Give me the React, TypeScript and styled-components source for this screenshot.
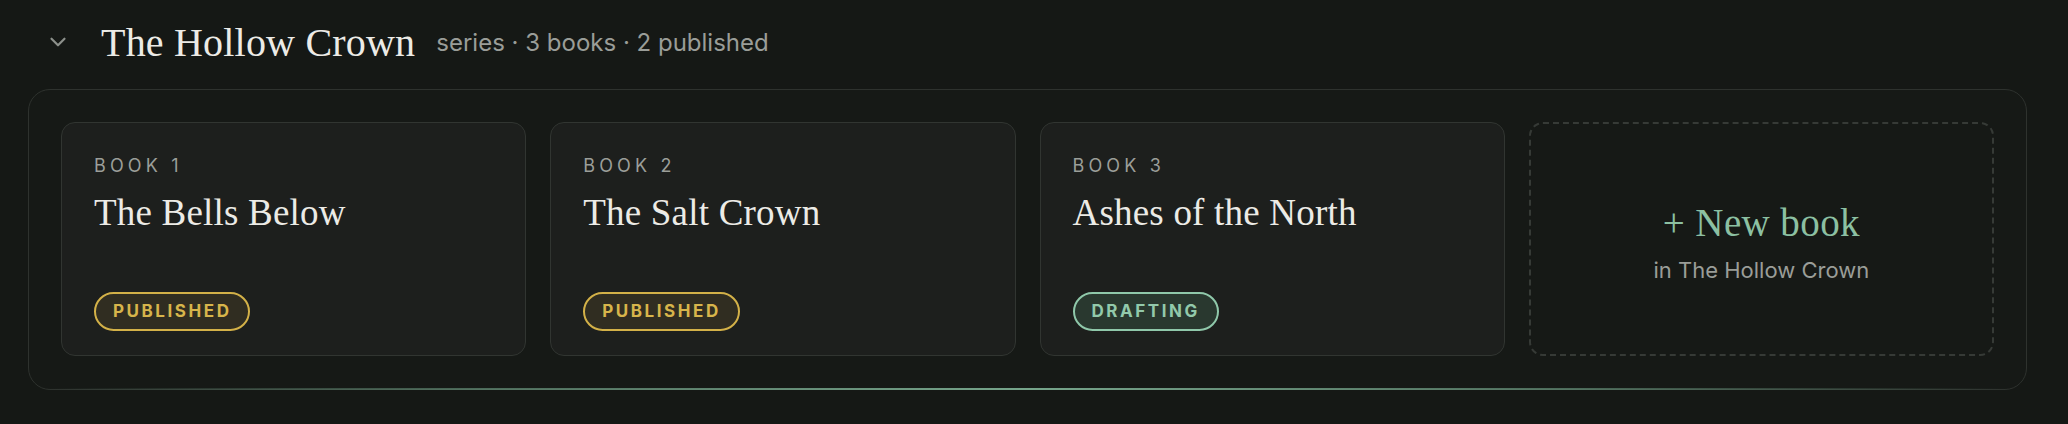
import styled, { createGlobalStyle } from "styled-components";
import { ChevronDown } from "lucide-react";

type BookStatus = "published" | "drafting";

type Book = {
    id: number;
    title: string;
    status: BookStatus;
};

const books: Book[] = [
    { id: 1, title: "The Bells Below", status: "published" },
    { id: 2, title: "The Salt Crown", status: "published" },
    { id: 3, title: "Ashes of the North", status: "drafting" },
];

const seriesName = "The Hollow Crown";

const GlobalStyle = createGlobalStyle`
body {
    margin: 0;
    background: #151815;
    font-family: Inter, "Noto Sans", sans-serif;
    color: #e9e7e1;
}
`

const Page = styled.div`
padding: 14px 41px 30px 28px;
`

const Header = styled.div`
display: flex;
align-items: center;
height: 56px;
margin-bottom: 19px;
`

const Toggle = styled.button`
display: flex;
align-items: center;
justify-content: center;
width: 34px;
height: 34px;
margin-left: 13px;
margin-right: 26px;
padding: 0;
border: none;
background: none;
color: #8c908b;
cursor: pointer;
`

const SeriesTitle = styled.h2`
margin: 0;
font-family: "Liberation Serif", serif;
font-weight: 400;
font-size: 40px;
letter-spacing: 0.2px;
color: #ecebe6;
`

const Meta = styled.span`
margin-left: 21px;
font-size: 24px;
color: #9a9d98;
`

const Shelf = styled.div`
position: relative;
display: grid;
grid-template-columns: repeat(4, 1fr);
gap: 24px;
padding: 32px 32px 33px;
border: 1px solid #2e322e;
border-radius: 22px;
background: #161916;

&::after {
    content: "";
    position: absolute;
    left: 16px;
    right: 16px;
    bottom: -1px;
    height: 2px;
    background: linear-gradient(90deg, rgba(104, 150, 125, 0) 0%, rgba(104, 150, 125, 0.65) 22%, #76a58b 50%, rgba(104, 150, 125, 0.65) 78%, rgba(104, 150, 125, 0) 100%);
}
`

const Card = styled.div`
display: flex;
flex-direction: column;
box-sizing: border-box;
height: 234px;
padding: 32px 32px 24px;
border: 1px solid #313531;
border-radius: 14px;
background: #1d1f1d;
`

const BookNo = styled.div`
font-size: 18px;
line-height: 22px;
letter-spacing: 0.23em;
color: #9b9e99;
`

const BookTitle = styled.div`
margin-top: 14px;
font-family: "Liberation Serif", serif;
font-size: 37px;
line-height: 44px;
letter-spacing: 0.2px;
color: #ecebe6;
`

const Badge = styled.span<{ $status: BookStatus }>`
align-self: flex-start;
margin-top: auto;
padding: 7px 17px 8px;
border: 2px solid ${p => p.$status === "published" ? "#d3b148" : "#8fc8aa"};
border-radius: 999px;
background: ${p => p.$status === "published" ? "rgba(211, 177, 72, 0.1)" : "rgba(90, 160, 122, 0.2)"};
color: ${p => p.$status === "published" ? "#d7b54b" : "#92c9ab"};
font-size: 17px;
line-height: 20px;
font-weight: 700;
letter-spacing: 0.15em;
`

const NewCard = styled.button`
display: flex;
flex-direction: column;
align-items: center;
justify-content: center;
gap: 12px;
height: 234px;
padding-top: 6px;
border: 2px dashed #363a36;
border-radius: 14px;
background: transparent;
cursor: pointer;
`

const NewLabel = styled.span`
font-family: "Liberation Serif", serif;
font-size: 39px;
line-height: 44px;
letter-spacing: 0.4px;
color: #8cc0a2;
`

const NewHint = styled.span`
font-family: Inter, "Noto Sans", sans-serif;
font-size: 22px;
line-height: 26px;
color: #9a9d98;
`

function App() {
    const published = books.filter(b => b.status === "published").length;

    return (
        <Page>
            <GlobalStyle />
            <Header>
                <Toggle aria-label="Collapse series">
                    <ChevronDown size={26} strokeWidth={2} />
                </Toggle>
                <SeriesTitle>{seriesName}</SeriesTitle>
                <Meta>series · {books.length} books · {published} published</Meta>
            </Header>
            <Shelf>
                {books.map(book => (
                    <Card key={book.id}>
                        <BookNo>BOOK {book.id}</BookNo>
                        <BookTitle>{book.title}</BookTitle>
                        <Badge $status={book.status}>{book.status.toUpperCase()}</Badge>
                    </Card>
                ))}
                <NewCard>
                    <NewLabel>+ New book</NewLabel>
                    <NewHint>in {seriesName}</NewHint>
                </NewCard>
            </Shelf>
        </Page>
    );
}

export default App;
